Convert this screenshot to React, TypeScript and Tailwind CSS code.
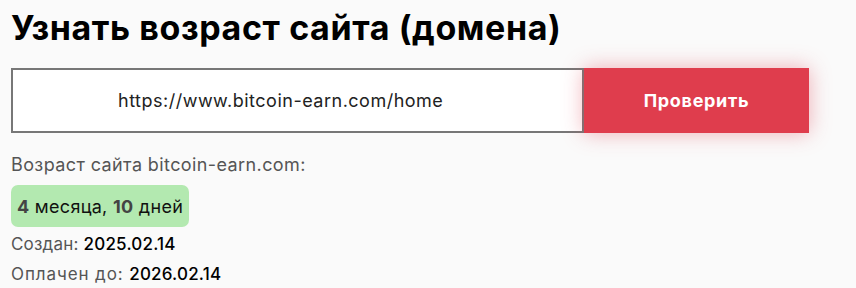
import React from "react";

const FONT = "font-['Inter','Noto_Sans',sans-serif]";

export default function App() {
	return (
		<div className={`min-h-[288px] w-[856px] bg-[#fafafa] px-[11px] pt-[6px] ${FONT}`}>
			<h1 className="text-[34px] font-bold leading-[44px] tracking-[0.6px] text-black">
				Узнать возраст сайта (домена)
			</h1>

			<div className="mt-[18px] flex h-[65px]">
				<div className="flex w-[573px] items-center border-2 border-[#777] bg-white pl-[105px] text-[18px] tracking-[0.5px] text-[#222]">
					https://www.bitcoin-earn.com/home
				</div>
				<button
					type="button"
					className="flex w-[225px] items-center justify-center bg-[#df3d4d] text-[18px] font-bold tracking-[0.7px] text-white shadow-[0_0_20px_rgba(223,61,77,0.4)]"
				>
					Проверить
				</button>
			</div>

			<div className="mt-[22px] text-[18px] leading-[20px] tracking-[0.4px] text-[#555]">
				Возраст сайта bitcoin-earn.com:
			</div>
			<div className="mt-[10px] inline-flex h-[42px] items-center rounded-[7px] bg-[#b3e9b0] px-[6px] text-[18px] tracking-[0.3px] text-[#111]">
				<b className="font-bold text-[#444]">4</b>&nbsp;месяца,&nbsp;
				<b className="font-bold text-[#444]">10</b>&nbsp;дней
			</div>
			<div className="mt-[2px] text-[17px] leading-[30px] tracking-[0.2px] text-[#555]">
				Создан: <span className="font-medium text-black">2025.02.14</span>
			</div>
			<div className="text-[17px] leading-[30px] text-[#555]">
				<span className="tracking-[0.9px]">Оплачен до: </span>
				<span className="font-medium tracking-[0.2px] text-black">2026.02.14</span>
			</div>
		</div>
	);
}
